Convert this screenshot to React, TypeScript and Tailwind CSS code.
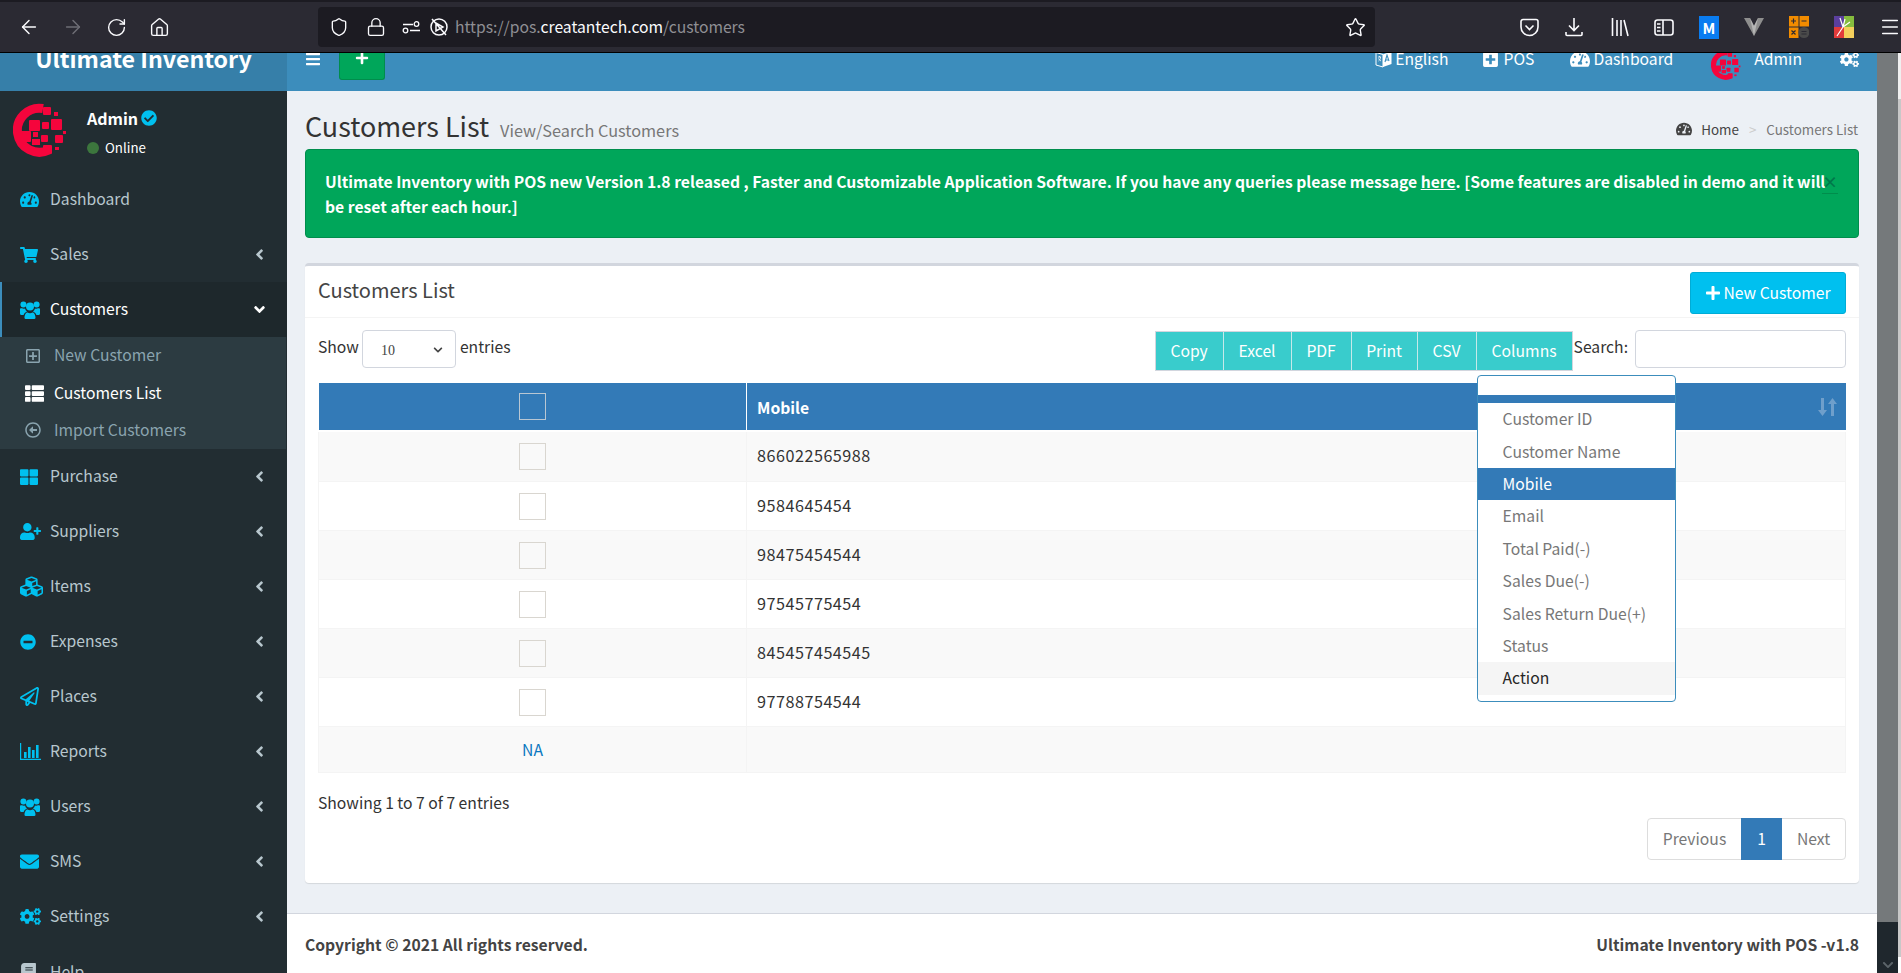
import React from "react";
import {
  FaTachometerAlt, FaShoppingCart, FaThLarge, FaUserPlus, FaCubes, FaMinusCircle,
  FaRegPaperPlane, FaEnvelope, FaCogs, FaBook, FaRegPlusSquare, FaThList, FaRegArrowAltCircleLeft,
  FaCheckCircle, FaPlusSquare, FaPlus, FaBars, FaAngleLeft, FaAngleDown, FaChevronDown,
} from "react-icons/fa";
import { ArrowLeft, ArrowRight, RotateCw, House, Shield, Lock, Star, Menu } from "lucide-react";

const Logo = ({ size }: { size: number }) => (
  <svg width={size} height={size} viewBox="0 0 54 54" className="shrink-0">
    <path d="M30 5.5 A22 22 0 1 0 36 47" fill="none" stroke="#f5053c" strokeWidth="9" />
    <g fill="#f5053c">
      <rect x="16" y="17" width="11" height="11" rx="1" />
      <rect x="30" y="4" width="8" height="8" rx="1" />
      <rect x="41" y="9" width="4" height="4" />
      <rect x="29" y="19" width="7" height="7" rx="1" />
      <rect x="38" y="16" width="11" height="11" rx="1" />
      <rect x="3" y="28" width="15" height="11" rx="1" />
      <rect x="20" y="29" width="5" height="5" />
      <rect x="28" y="32" width="7" height="7" rx="1" />
      <rect x="42" y="32" width="8" height="8" rx="1" />
      <rect x="30" y="42" width="9" height="9" rx="1" />
      <rect x="19" y="36" width="8" height="6" />
      <rect x="42" y="44" width="4" height="3" />
      <rect x="50" y="28" width="3" height="3" />
    </g>
  </svg>
);

const BarChart = () => (
  <svg width="21" height="17" viewBox="0 0 21 17" fill="currentColor">
    <path d="M0 0h1.2v15.8H21V17H0z" />
    <rect x="4" y="9" width="2.6" height="6" />
    <rect x="8" y="4" width="2.6" height="11" />
    <rect x="12" y="7" width="2.6" height="8" />
    <rect x="16" y="2" width="2.6" height="13" />
  </svg>
);

const Users = () => (
  <svg width="20" height="18" viewBox="0 0 20 18" fill="currentColor">
    <circle cx="3.4" cy="3.4" r="3" />
    <circle cx="16.6" cy="3.4" r="3" />
    <circle cx="10" cy="5.6" r="4" />
    <path d="M0 8.2C0 7.2 1 6.9 2 7.3c1 .5 2 .5 3 .2.3 1.3 1 2.3 2 3-1.8.7-3 2-3.4 3.5H1.5C.5 14 0 13.3 0 12.5zM20 8.2c0-1-1-1.3-2-.9-1 .5-2 .5-3 .2-.3 1.3-1 2.3-2 3 1.8.7 3 2 3.4 3.5h2.1c1 0 1.5-.7 1.5-1.5z" />
    <path d="M5.5 18c-.6 0-1-.5-1-1.2 0-2.8 1.2-5.4 3-5.4 1.5 1 3.5 1 5 0 1.8 0 3 2.6 3 5.4 0 .7-.4 1.2-1 1.2z" />
  </svg>
);

const SortArrows = () => (
  <svg width="19" height="18" viewBox="0 0 19 18" fill="currentColor">
    <path d="M3 0h3v12h3l-4.5 6L0 12h3zM13 18h3V6h3L14.5 0 10 6h3z" />
  </svg>
);

const LanguageIcon = () => (
  <svg width="17" height="18" viewBox="0 0 17 18" className="shrink-0">
    <path d="M1 2.5l7 2v12.5l-7-2z" fill="none" stroke="#fff" strokeWidth="1" />
    <path d="M8 4.5L16.5 1v13L8 17z" fill="#fff" />
    <path d="M3 7h3M4.5 6v1M3.5 11c1.5-1 2-2.5 2-4M3.5 8.5c.5 1.2 1.5 2 2.5 2.5" fill="none" stroke="#fff" strokeWidth=".8" />
    <path d="M10 12l2-7 2 6M10.8 10h2.6" fill="none" stroke="#3c8dbc" strokeWidth="1.1" />
  </svg>
);

const menu: [string, React.ReactNode][] = [
  ["Purchase", <FaThLarge size={18} />],
  ["Suppliers", <FaUserPlus size={21} />],
  ["Items", <FaCubes size={23} />],
  ["Expenses", <FaMinusCircle size={16} />],
  ["Places", <FaRegPaperPlane size={19} />],
  ["Reports", <BarChart />],
  ["Users", <Users />],
  ["SMS", <FaEnvelope size={19} />],
  ["Settings", <FaCogs size={21} />],
];

const SideRow = ({ label, icon, chevron = true }: { label: string; icon: React.ReactNode; chevron?: boolean }) => (
  <div className="flex h-[55px] shrink-0 items-center pl-[20px] pr-[19px] text-[#b8c7ce]">
    <span className="flex w-[30px] shrink-0 items-center text-[#00c0ef]">{icon}</span>
    <span className="-mt-[1px] flex-1 leading-[24px]">{label}</span>
    {chevron && <FaAngleLeft size={17} className="text-[#b8c7ce]" />}
  </div>
);

const SubRow = ({ label, icon, active }: { label: string; icon: React.ReactNode; active?: boolean }) => (
  <div className={`flex h-[37.4px] items-center pl-[25px] leading-[24px] ${active ? "text-white" : "text-[#8aa4af]"}`}>
    <span className="flex w-[29px] shrink-0 items-center">{icon}</span>
    <span className="-mt-[1px]">{label}</span>
  </div>
);

const rows = ["866022565988", "9584645454", "98475454544", "97545775454", "845457454545", "97788754544"];
const columns = ["Customer ID", "Customer Name", "Mobile", "Email", "Total Paid(-)", "Sales Due(-)", "Sales Return Due(+)", "Status", "Action"];
const tools: [string, string][] = [["Copy", "w-[68px]"], ["Excel", "w-[68px]"], ["PDF", "w-[60px]"], ["Print", "w-[66px]"], ["CSV", "w-[59px]"]];

const Tool = ({ children, className = "" }: { children: React.ReactNode; className?: string }) => (
  <span className={`flex shrink-0 items-center ${className}`}>{children}</span>
);

const Browser = () => (
  <div className="flex h-[53px] shrink-0 flex-col border-b border-black bg-[#2b2a33] text-[#fbfbfe]">
    <div className="h-[2px] bg-[#1c1b22]" />
    <div className="relative flex flex-1 items-center">
      <div className="flex w-[318px] shrink-0 items-center gap-[22px] pl-[18px]">
        <ArrowLeft size={22} strokeWidth={1.6} />
        <ArrowRight size={22} strokeWidth={1.6} className="text-[#6e6d75]" />
        <RotateCw size={21} strokeWidth={1.6} />
        <House size={21} strokeWidth={1.6} />
      </div>
      <div className="flex h-[40px] w-[1057px] shrink-0 items-center rounded-[4px] bg-[#1c1b22] pl-[11px] pr-[9px]">
        <Shield size={20} strokeWidth={1.6} className="shrink-0" />
        <Lock size={20} strokeWidth={1.6} className="ml-[17px] shrink-0" />
        <svg width="19" height="16" viewBox="0 0 19 16" fill="none" stroke="currentColor" strokeWidth="1.3" className="ml-[16px] shrink-0">
          <path d="M1 5.5h10M8 11.5h10" />
          <circle cx="14.5" cy="5" r="2.3" />
          <circle cx="3.5" cy="11.5" r="2.3" />
        </svg>
        <svg width="20" height="20" viewBox="0 0 20 20" fill="none" stroke="currentColor" strokeWidth="1.5" className="ml-[8px] shrink-0">
          <circle cx="10" cy="10" r="8" />
          <path d="M3 2l14 16M7 6v8l7-4z" />
        </svg>
        <span className="ml-[6px] flex-1 text-[15.7px] leading-[24px] text-[#8f8f94]">
          https://pos.<span className="text-[#fbfbfe]">creatantech.com</span>/customers
        </span>
        <Star size={21} strokeWidth={1.6} />
      </div>
      <Tool className="ml-[145px]">
        <svg width="19" height="19" viewBox="0 0 19 19" fill="none" stroke="currentColor" strokeWidth="1.6">
          <path d="M1 3.5A2 2 0 0 1 3 1.5h13a2 2 0 0 1 2 2V9a8.5 8.5 0 0 1-17 0z" />
          <path d="M5.5 7.5l4 4 4-4" />
        </svg>
      </Tool>
      <Tool className="ml-[26px]">
        <svg width="18" height="20" viewBox="0 0 18 20" fill="none" stroke="currentColor" strokeWidth="1.6">
          <path d="M9 1v12M4 8.5l5 5 5-5M1 15v2.5a1 1 0 0 0 1 1h14a1 1 0 0 0 1-1V15" />
        </svg>
      </Tool>
      <Tool className="ml-[28px]">
        <svg width="18" height="20" viewBox="0 0 18 20" fill="none" stroke="currentColor" strokeWidth="1.6">
          <path d="M1.5 1v18M6 3v16M10 3v16M13 3l4 16" />
        </svg>
      </Tool>
      <Tool className="ml-[25px]">
        <svg width="20" height="17" viewBox="0 0 20 17" fill="none" stroke="currentColor" strokeWidth="1.6">
          <rect x="1" y="1" width="18" height="15" rx="2.5" />
          <path d="M9 1v15M3 5h3.5M3 8.5h3.5M3 12h3.5" />
        </svg>
      </Tool>
      <div className="ml-[25px] flex h-[23px] w-[20px] shrink-0 items-center justify-center bg-[#0a7cf0] text-[15px] font-bold leading-[23px] text-white">M</div>
      <Tool className="ml-[25px]">
        <svg width="20" height="20" viewBox="0 0 20 20">
          <path d="M0 1h6l4 8 4-8h6L10 19z" fill="#8e8e8e" />
          <path d="M6 1l4 8 4-8-4 18z" fill="#b5b5b5" />
        </svg>
      </Tool>
      <Tool className="ml-[25px]">
        <svg width="20" height="22" viewBox="0 0 20 22" stroke="#2b2a33" strokeWidth="1.2">
          <rect x="0" y="0" width="9.5" height="10.5" fill="#f28c00" stroke="none" />
          <rect x="10.5" y="0" width="9.5" height="10.5" fill="#f28c00" stroke="none" />
          <rect x="0" y="11.5" width="9.5" height="10.5" fill="#f28c00" stroke="none" />
          <circle cx="15" cy="16.5" r="5.5" fill="#4a4a4a" stroke="none" />
          <path d="M2 5h5M4.5 2.5v5M12.5 5h5M2.5 14.5l4 4M6.5 14.5l-4 4M12.5 15.5h5M12.5 18h5" />
        </svg>
      </Tool>
      <Tool className="ml-[25px]">
        <svg width="20" height="22" viewBox="0 0 20 22">
          <rect x="0" y="0" width="10" height="11" fill="#5b3f9e" />
          <rect x="10" y="0" width="10" height="11" fill="#86bc3e" />
          <rect x="0" y="11" width="10" height="11" fill="#e23b3b" />
          <rect x="10" y="11" width="10" height="11" fill="#f4cf5c" />
          <path d="M9 11L6 2M9 11L11 3M9 11l7-5M9 11L3 20" stroke="#fff" strokeWidth="1.2" />
        </svg>
      </Tool>
      <Menu size={22} strokeWidth={1.6} className="ml-[25px] shrink-0" />
    </div>
  </div>
);

export default function App() {
  return (
    <div className="flex h-[973px] w-full flex-col overflow-hidden bg-[#ecf0f5] font-['Noto_Sans_CJK_SC',sans-serif] text-[15.7px] leading-[24px] text-[#333333]">
      <Browser />
      <div className="flex min-h-0 flex-1">
        <aside className="flex w-[287px] shrink-0 flex-col overflow-hidden bg-[#222d32]">
          <div className="h-[38px] shrink-0 overflow-hidden bg-[#367fa9] text-center text-[23.2px] font-bold leading-[28px] text-white">
            <div className="-mt-[9px]">Ultimate Inventory</div>
          </div>
          <div className="flex h-[81px] shrink-0 pl-[13px] pt-[12px]">
            <Logo size={54} />
            <div className="ml-[20px] flex flex-col">
              <div className="mt-[3px] flex items-center gap-[3px] text-[16px] font-bold leading-[24px] text-white">
                Admin <FaCheckCircle size={16} className="text-[#00c0ef]" />
              </div>
              <div className="mt-[8px] flex items-center gap-[6px] text-[13.3px] leading-[20px] text-white">
                <span className="h-[12px] w-[12px] rounded-full bg-[#3c763d]" /> Online
              </div>
            </div>
          </div>
          <SideRow label="Dashboard" icon={<FaTachometerAlt size={19} />} chevron={false} />
          <SideRow label="Sales" icon={<FaShoppingCart size={18} />} />
          <div className="flex h-[55px] shrink-0 items-center border-l-[2px] border-[#3c8dbc] bg-[#1e282c] pl-[18px] pr-[19px] text-white">
            <span className="flex w-[30px] shrink-0 items-center text-[#00c0ef]"><Users /></span>
            <span className="-mt-[1px] flex-1">Customers</span>
            <FaAngleDown size={17} />
          </div>
          <div className="mr-[1px] shrink-0 bg-[#2c3b41]">
            <SubRow label="New Customer" icon={<FaRegPlusSquare size={16} />} />
            <SubRow label="Customers List" active icon={<FaThList size={19} />} />
            <SubRow label="Import Customers" icon={<FaRegArrowAltCircleLeft size={16} />} />
          </div>
          {menu.map(([label, icon]) => (
            <SideRow key={label} label={label} icon={icon} />
          ))}
          <div className="flex h-[55px] shrink-0 items-center pl-[20px] text-[#b8c7ce]">
            <span className="flex w-[30px] items-center text-[#b8c7ce]"><FaBook size={17} /></span>
            <span>Help</span>
          </div>
        </aside>

        <div className="flex min-w-0 flex-1 flex-col">
          <header className="flex h-[38px] shrink-0 items-start overflow-hidden bg-[#3c8dbc] pl-[18px] pr-[18px] text-white">
            <FaBars size={16} className="-mt-[2px]" />
            <div className="ml-[18px] flex h-[27px] w-[46px] items-start justify-center rounded-b-[3px] border border-t-0 border-[#008d4c] bg-[#00a65a]">
              <FaPlus size={14} className="-mt-[2px]" />
            </div>
            <div className="-mt-[6px] ml-auto flex items-center leading-[24px]">
              <LanguageIcon />
              <span className="ml-[3px]">English</span>
              <FaPlusSquare size={17} className="ml-[34px]" />
              <span className="ml-[4px]">POS</span>
              <FaTachometerAlt size={20} className="ml-[36px]" />
              <span className="ml-[3px]">Dashboard</span>
              <span className="-mb-[12px] ml-[38px] flex"><Logo size={30} /></span>
              <span className="ml-[13px]">Admin</span>
              <FaCogs size={19} className="ml-[38px]" />
            </div>
          </header>

          <main className="flex min-h-0 flex-1 flex-col overflow-hidden pl-[18px] pr-[18px]">
            <div className="mt-[19px] flex h-[34px] shrink-0 items-center">
              <h1 className="-mt-[2px] text-[26.9px] leading-[34px] text-[#333333]">Customers List</h1>
              <span className="ml-[11px] mt-[6px] text-[16.3px] leading-[24px] text-[#777777]">View/Search Customers</span>
              <div className="ml-auto mr-[1px] mt-[4px] flex items-center text-[13.4px] leading-[20px]">
                <FaTachometerAlt size={16} className="text-[#444444]" />
                <span className="ml-[9px] text-[#444444]">Home</span>
                <span className="ml-[10px] text-[#cccccc]">&gt;</span>
                <span className="ml-[10px] text-[#777777]">Customers List</span>
              </div>
            </div>

            <div className="mt-[5px] flex h-[89px] shrink-0 rounded-[4px] border border-[#008d4c] bg-[#00a65a] pl-[19px] pr-[20px] pt-[19px] font-bold leading-[25px] text-white">
              <div className="flex-1">
                Ultimate Inventory with POS new Version 1.8 released , Faster and Customizable Application Software. If you have any queries please message <u>here</u>. [Some features are disabled in demo and it will be reset after each hour.]
              </div>
              <span className="-ml-[6px] h-[25px] shrink-0 border-b border-[#008d4c] font-bold text-[#00774a]">×</span>
            </div>

            <section className="mt-[25px] shrink-0 rounded-[4px] border-t-[3px] border-[#d2d6de] bg-white shadow-[0_1px_1px_rgba(0,0,0,0.1)]">
              <div className="flex h-[52px] items-center justify-between border-b border-[#f4f4f4] px-[13px]">
                <h3 className="mb-[3px] text-[20px] leading-[26px] text-[#444444]">Customers List</h3>
                <button className="-mb-[2px] flex h-[42px] w-[156px] items-center justify-center rounded-[3px] border border-[#00acd6] bg-[#00c0ef] leading-[24px] text-white">
                  <FaPlus size={16} className="mr-[2px]" />New Customer
                </button>
              </div>

              <div className="px-[13px] pb-[23px] pt-[12px]">
                <div className="flex h-[41px] items-start">
                  <span className="mt-[5px]">Show</span>
                  <div className="ml-[3px] flex h-[38px] w-[94px] items-center justify-between rounded-[4px] border border-[#d2d6de] pl-[18px] pr-[12px]">
                    <span className="mt-[3px] font-['Liberation_Serif',serif] text-[14px] leading-[20px] text-[#444444]">10</span>
                    <FaChevronDown size={10} className="mt-[1px] text-[#444444]" />
                  </div>
                  <span className="ml-[4px] mt-[5px]">entries</span>
                  <div className="ml-auto mt-[1px] flex h-[40px] items-center border border-[#d2d6de] bg-[#39cccc] text-white">
                    {tools.map(([b, w]) => (
                      <div key={b} className={`flex h-full items-center justify-center border-r border-[#c6e9e9] ${w}`}>{b}</div>
                    ))}
                    <div className="relative flex h-full w-[95px] items-center justify-center">
                      Columns
                      <div className="absolute left-[0px] top-[43px] z-10 w-[199px] rounded-[4px] border border-[#3c8dbc] bg-white pb-[6px] text-[#777777]">
                        <div className="mt-[19px] h-[8px] bg-[#337ab7]" />
                        {columns.map((c) => (
                          <div
                            key={c}
                            className={`flex h-[32.4px] items-center pl-[25px] ${c === "Mobile" ? "bg-[#337ab7] text-white" : c === "Action" ? "bg-[#f5f5f5] text-[#262626]" : ""}`}
                          >
                            {c}
                          </div>
                        ))}
                      </div>
                    </div>
                  </div>
                  <span className="ml-[1px] mt-[5px]">Search:</span>
                  <div className="ml-[7px] h-[38px] w-[211px] rounded-[4px] border border-[#d2d6de]" />
                </div>

                <table className="mt-[12px] w-full table-fixed border-collapse">
                  <thead>
                    <tr className="h-[47px] bg-[#337ab7] text-white">
                      <th className="w-[428px] border-r border-white">
                        <div className="mx-auto h-[27px] w-[27px] border border-[#b9c7d3]" />
                      </th>
                      <th className="relative px-[10px] pt-[2px] text-left font-bold">
                        Mobile
                        <span className="absolute right-[9px] top-[15px] text-[#6f9fcb]"><SortArrows /></span>
                      </th>
                    </tr>
                  </thead>
                  <tbody>
                    <tr className="h-[2px]"><td colSpan={2} /></tr>
                    {rows.map((r, i) => (
                      <tr key={r} className={`h-[49px] border-b border-[#f4f4f4] ${i % 2 === 0 ? "bg-[#f9f9f9]" : "bg-white"}`}>
                        <td className="border-x border-[#f4f4f4]">
                          <div className="mx-auto mt-[1px] h-[27px] w-[27px] border border-[#d9d6d0]" />
                        </td>
                        <td className="border-r border-[#f4f4f4] px-[10px] pb-[2px] text-[16.2px] tracking-[0.5px]">{r}</td>
                      </tr>
                    ))}
                    <tr className="h-[46px] border-b border-[#f4f4f4] bg-[#f9f9f9]">
                      <td className="border-x border-[#f4f4f4] pt-[2px] text-center text-[#0a77c0]">NA</td>
                      <td className="border-r border-[#f4f4f4]" />
                    </tr>
                  </tbody>
                </table>

                <div className="mt-[18px] h-[24px]">Showing 1 to 7 of 7 entries</div>
                <div className="mt-[3px] flex justify-end">
                  <div className="flex h-[42px] items-stretch rounded-[4px] border border-[#dddddd] text-[#777777]">
                    <span className="flex w-[93px] items-center justify-center">Previous</span>
                    <span className="-my-[1px] flex w-[41px] items-center justify-center bg-[#337ab7] text-white">1</span>
                    <span className="flex w-[63px] items-center justify-center">Next</span>
                  </div>
                </div>
              </div>
            </section>
          </main>

          <footer className="flex h-[60px] shrink-0 items-center justify-between border-t border-[#d2d6de] bg-white pl-[18px] pr-[18px] pt-[3px] font-bold text-[#444444]">
            <span>Copyright © 2021 All rights reserved.</span>
            <span>Ultimate Inventory with POS -v1.8</span>
          </footer>
        </div>

        <div className="flex w-[24px] shrink-0">
          <div className="flex w-[21px] flex-col">
            <div className="flex-1 bg-[#75797b]" />
            <div className="flex h-[51px] items-end justify-center bg-[#1f272d] pb-[2px] text-[#5b6469]">
              <FaChevronDown size={12} />
            </div>
          </div>
          <div className="flex w-[3px] flex-col">
            <div className="h-[46px] bg-[#f0f0f0]" />
            <div className="flex-1 bg-[#c8c8c8]" />
            <div className="h-[16px] bg-white" />
          </div>
        </div>
      </div>
    </div>
  );
}
